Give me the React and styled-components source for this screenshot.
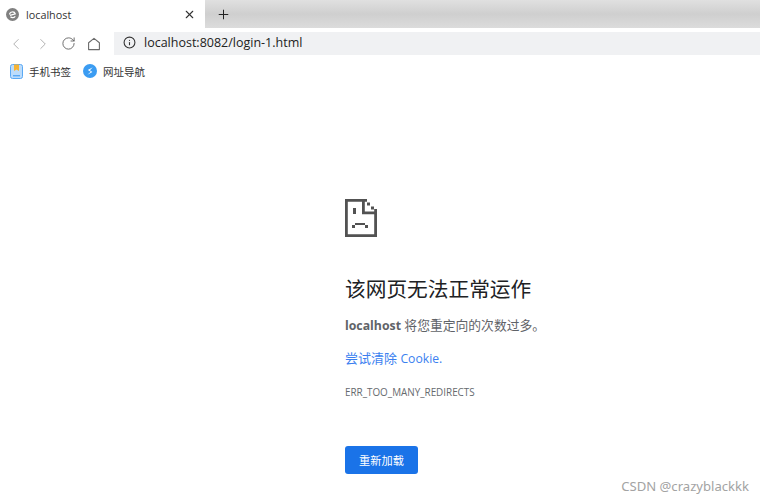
import React from "react";
import styled, { createGlobalStyle } from "styled-components";
import { X, Plus, ChevronLeft, ChevronRight, RotateCw, Info } from "lucide-react";

const FONT = `"Open Sans", "Noto Sans CJK SC", sans-serif`;

const Global = createGlobalStyle`
  html, body { margin: 0; padding: 0; background: #fff; }
  body { font-family: ${FONT}; overflow: hidden; }
`;

const Page = styled.div`
  position: relative;
  width: 760px;
  height: 500px;
  overflow: hidden;
  background: #fff;
`;

const TabStrip = styled.div`
  display: flex;
  align-items: stretch;
  height: 28px;
  background: linear-gradient(180deg, #e0e0e0 0%, #cfcfcf 50%, #dcdcdc 100%);
`;

const Tab = styled.div`
  display: flex;
  align-items: center;
  width: 205px;
  padding: 0 9px 0 6px;
  box-sizing: border-box;
  background: #fff;
`;

const TabTitle = styled.span`
  flex: 1;
  margin-left: 7px;
  font-size: 10.8px;
  color: #333;
`;

const NewTab = styled.div`
  display: flex;
  align-items: center;
  margin-left: 11px;
  color: #222;
`;

const Toolbar = styled.div`
  display: flex;
  align-items: center;
  height: 23px;
  margin-top: 4px;
`;

const NavIcons = styled.div`
  display: flex;
  align-items: center;
  gap: 9px;
  width: 114px;
  padding-left: 7px;
  box-sizing: border-box;
`;

const HomeSlot = styled.span`
  display: flex;
  margin-left: 2px;
`;

const AddressBar = styled.div`
  flex: 1;
  display: flex;
  align-items: center;
  height: 23px;
  padding: 0 0 2px 9px;
  box-sizing: border-box;
  gap: 8px;
  background: #f0f1f3;
  font-size: 12.5px;
  color: #222;
`;

const Bookmarks = styled.div`
  display: flex;
  align-items: center;
  height: 24px;
  margin-top: 4px;
  padding-left: 10px;
`;

const Bookmark = styled.div`
  display: flex;
  align-items: center;
  gap: ${(p) => p.$gap}px;
  margin-right: 12px;
  font-size: 10.5px;
  color: #333;
`;

const Main = styled.main`
  display: flex;
  flex-direction: column;
  align-items: flex-start;
  padding: 116px 0 0 345px;
`;

const Heading = styled.h1`
  margin: 37px 0 0;
  font-size: 20.7px;
  line-height: 30px;
  font-weight: 400;
  color: #202124;
`;

const Message = styled.p`
  margin: 11px 0 0;
  font-size: 12.8px;
  line-height: 20px;
  color: #5f6368;

  b { font-weight: 700; font-size: 12.3px; }
`;

const Suggest = styled.a`
  margin-top: 12px;
  font-size: 13px;
  line-height: 20px;
  color: #3b7ff0;
`;

const SuggestLatin = styled.span`
  font-size: 12.2px;
`;

const ErrorCode = styled.div`
  margin-top: 16px;
  font-size: 9.9px;
  line-height: 14px;
  color: #666a6e;
`;

const Reload = styled.button`
  margin-top: 47px;
  width: 73px;
  height: 28px;
  padding: 0;
  border: none;
  border-radius: 3px;
  background: #1a73e8;
  color: #fff;
  font-family: ${FONT};
  font-size: 11.2px;
`;

const Watermark = styled.div`
  position: absolute;
  right: 11px;
  bottom: 5px;
  font-family: "Noto Sans", sans-serif;
  font-size: 13.1px;
  color: #a3a3a3;
`;

const Favicon = () => (
  <svg width="13" height="13" viewBox="0 0 13 13">
    <circle cx="6.5" cy="6.5" r="6.5" fill="#808080" />
    <path d="M3.6 6.5a2.9 2.6 0 0 1 5.7-.6L4 7.4M9.2 8.2a2.9 2.6 0 0 1-4.7.6" fill="none" stroke="#fff" strokeWidth="1.2" />
  </svg>
);

const HomeIcon = () => (
  <svg width="14" height="14" viewBox="0 0 14 14" fill="none" stroke="#6a6a6a" strokeWidth="1.1">
    <path d="M1.6 12.6V5.800L7 1.400l5.400 4.400v6.800Z" strokeLinejoin="round" />
  </svg>
);

const BookIcon = () => (
  <svg width="13" height="15" viewBox="0 0 13 15">
    <rect x="0.5" y="0.5" width="12" height="14" rx="2" fill="#bcdcfb" stroke="#5aa9f4" />
    <path d="M4 0.5h5V7L6.5 5.4 4 7Z" fill="#f5b335" />
    <rect x="3" y="11" width="7" height="1.4" fill="#5aa9f4" />
  </svg>
);

const NavLogo = () => (
  <svg width="14" height="14" viewBox="0 0 14 14">
    <circle cx="7" cy="7" r="7" fill="#3b9cf2" />
    <path d="M9.800 3.300 4.800 6l3 1.700-3.400 3 5-2.700L6.900 6.300Z" fill="#fff" />
  </svg>
);

const SadPage = () => (
  <svg width="32" height="38" viewBox="0 0 32 38" fill="#525252">
    <path d="M0 0h22v2.800H2.800v32.400h26.400V10H32v28H0Z" />
    <path d="M17 0h2.800v12.500H32v2.800H17Z" />
    <path d="M22 3.500h3v3h-3ZM26 7.500h3v3h-3Z" />
    <path d="M8 9h3v6H8ZM10 24h10v2H10ZM7 26h3v3H7ZM20 26h3v3h-3Z" />
  </svg>
);

export default function App() {
  return (
    <Page>
      <Global />
      <TabStrip>
        <Tab>
          <Favicon />
          <TabTitle>localhost</TabTitle>
          <X size={13} color="#333" />
        </Tab>
        <NewTab>
          <Plus size={15} strokeWidth={1.6} />
        </NewTab>
      </TabStrip>
      <Toolbar>
        <NavIcons>
          <ChevronLeft size={18} strokeWidth={1.3} color="#b0b0b0" />
          <ChevronRight size={18} strokeWidth={1.3} color="#b0b0b0" />
          <RotateCw size={15} strokeWidth={1.4} color="#5a5a5a" />
          <HomeSlot>
            <HomeIcon />
          </HomeSlot>
        </NavIcons>
        <AddressBar>
          <Info size={13} strokeWidth={2} color="#333" />
          localhost:8082/login-1.html
        </AddressBar>
      </Toolbar>
      <Bookmarks>
        <Bookmark $gap={6}>
          <BookIcon />
          手机书签
        </Bookmark>
        <Bookmark $gap={6}>
          <NavLogo />
          网址导航
        </Bookmark>
      </Bookmarks>
      <Main>
        <SadPage />
        <Heading>该网页无法正常运作</Heading>
        <Message>
          <b>localhost</b> 将您重定向的次数过多。
        </Message>
        <Suggest>尝试清除 <SuggestLatin>Cookie.</SuggestLatin></Suggest>
        <ErrorCode>ERR_TOO_MANY_REDIRECTS</ErrorCode>
        <Reload>重新加载</Reload>
      </Main>
      <Watermark>CSDN @crazyblackkk</Watermark>
    </Page>
  );
}
